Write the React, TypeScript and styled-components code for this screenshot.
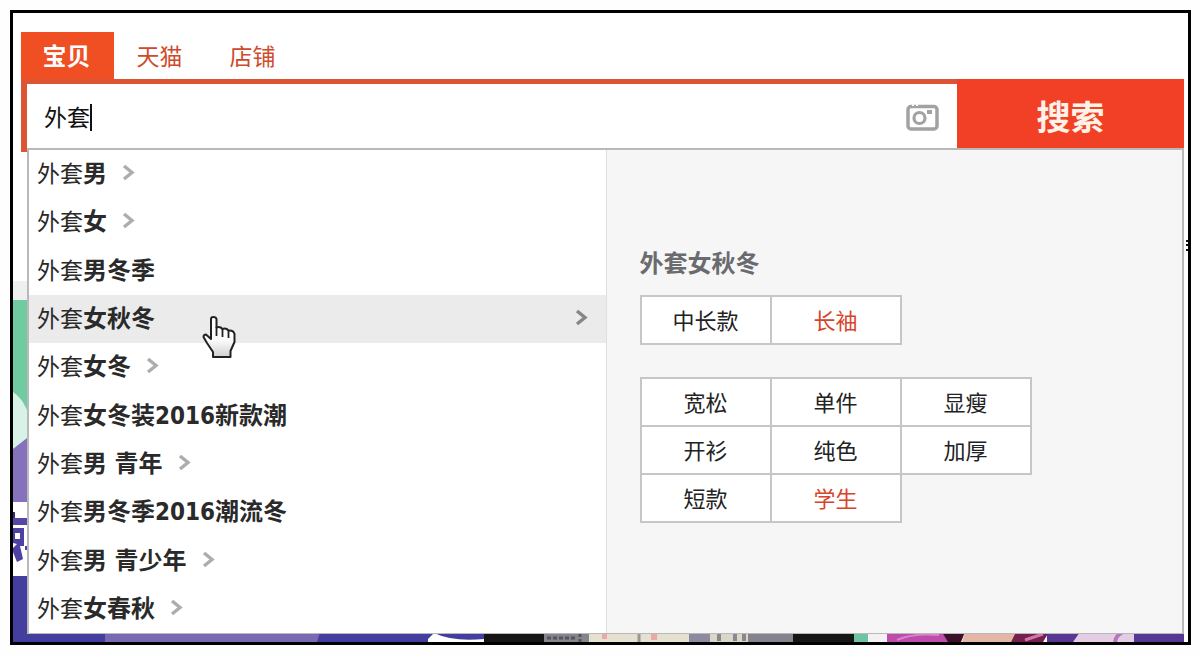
import React from "react";
import styled, { createGlobalStyle } from "styled-components";

const GlobalStyle = createGlobalStyle`
  * { box-sizing: border-box; }
  body {
    margin: 10px 9px 10px 10px;
    background: #fefefe;
    font-family: "DejaVu Sans Condensed", "Noto Sans CJK SC", sans-serif;
    color: #2a2a2a;
  }
  button, input { font: inherit; }
`;

const Frame = styled.main`
  position: relative;
  overflow: hidden;
  border: 3px solid #000;
  padding: 19px 4px 8px 8px;
  background: #fff;
`;

const Backdrop = styled.svg`
  position: absolute;
  inset: 0;
  width: 100%;
  height: 100%;
`;

const Content = styled.div`
  position: relative;
`;

const Tabs = styled.nav`
  display: flex;
`;

const Tab = styled.a<{ $active?: boolean }>`
  width: 93px;
  height: 47px;
  padding-right: 2px;
  line-height: 50px;
  text-align: center;
  text-decoration: none;
  font-size: ${(p) => (p.$active ? 24 : 23)}px;
  font-weight: ${(p) => (p.$active ? 700 : 400)};
  color: ${(p) => (p.$active ? "#fff" : "#cf4a2c")};
  background: ${(p) => (p.$active ? "#f04e23" : "transparent")};
`;

const SearchBar = styled.form`
  display: flex;
  align-items: flex-start;
  height: 73px;
  border-left: 6px solid #dc5433;
`;

const Field = styled.label`
  flex: 1;
  display: flex;
  align-items: center;
  height: 70px;
  padding: 2px 18px 0 17px;
  border-top: 5px solid #dc5433;
  background: #fff;
`;

const Query = styled.input`
  field-sizing: content;
  padding: 0;
  border: 0;
  outline: 0;
  font-size: 23px;
  line-height: 32px;
  color: #111;
`;

const Caret = styled.span`
  width: 2px;
  height: 27px;
  background: #111;
`;

const CameraButton = styled.button`
  display: flex;
  margin-left: auto;
  padding: 0;
  border: 0;
  background: none;
`;

const SubmitButton = styled.button`
  width: 227px;
  height: 69px;
  padding: 8px 0 0;
  border: 0;
  background: #f24027;
  color: #fff3e8;
  font-size: 34px;
  font-weight: 700;
  line-height: 60px;
`;

const Dropdown = styled.section`
  position: relative;
  display: flex;
  margin: -4px 0 0 6px;
  border: 2px solid #b9b9bb;
  border-bottom-width: 1px;
  background: #fff;
`;

const Suggestions = styled.ul`
  flex: 1 1 50%;
  display: grid;
  grid-auto-rows: 1fr;
  min-height: 483px;
  margin: 0;
  padding: 0;
  list-style: none;
`;

const Suggestion = styled.li<{ $active?: boolean }>`
  position: relative;
  background: ${(p) => (p.$active ? "#ebebeb" : "transparent")};
`;

const SuggestionLink = styled.a<{ $active?: boolean }>`
  display: flex;
  align-items: center;
  justify-content: ${(p) => (p.$active ? "space-between" : "flex-start")};
  gap: 15px;
  height: 100%;
  padding: 0 18px 0 8px;
  color: inherit;
  font-size: 23px;
  line-height: 48px;
  text-decoration: none;
  white-space: pre;

  strong { font-size: 24px; }
`;

const HandCursor = styled.svg`
  position: absolute;
  left: 173px;
  top: 20px;
  z-index: 1;
`;

const Refine = styled.aside`
  flex: 1 1 50%;
  padding: 98px 20px 20px 33px;
  border-left: 1px solid #dedede;
  background: #f6f6f6;
`;

const RefineTitle = styled.h2`
  margin: 0 0 15px;
  font-size: 24px;
  line-height: 32px;
  color: #6a6b6e;
`;

const ChipGrid = styled.div`
  display: grid;
  grid-template-columns: repeat(3, 130px);
  grid-auto-rows: 48px;
  margin-bottom: 34px;
`;

const Chip = styled.button<{ $hot?: boolean }>`
  margin: 0 -2px -2px 0;
  padding: 3px 0 0;
  border: 2px solid #c6c6c6;
  background: #fff;
  font-size: 22px;
  line-height: 42px;
  color: ${(p) => (p.$hot ? "#d8432b" : "#222")};
`;

const Chevron = ({ dark }: { dark?: boolean }) => (
  <svg width="13" height="18" viewBox="0 0 13 18" fill="none" aria-hidden="true">
    <path d="M2 1 10 7.500 2 14" stroke={dark ? "#84868a" : "#adadad"} strokeWidth="3.400" />
  </svg>
);

const Camera = () => (
  <svg width="33" height="27" viewBox="0 0 33 27" fill="none" stroke="#a2a2a2" aria-hidden="true">
    <rect x="2" y="2.5" width="29" height="22.5" rx="3" strokeWidth="3.5" />
    <circle cx="13.5" cy="14" r="5.5" strokeWidth="3.2" />
    <rect x="21" y="6" width="5" height="4" fill="#a2a2a2" stroke="none" />
    <path d="M6 1.2h2M10 1.2h2" stroke="#fff" strokeWidth="1.4" />
  </svg>
);

const Hand = () => (
  <HandCursor width="34" height="44" viewBox="0 0 34 44" aria-hidden="true">
    <defs>
      <linearGradient id="glove" x1="0" y1="0" x2="0" y2="1">
        <stop offset="0.55" stopColor="#fff" />
        <stop offset="1" stopColor="#cfcfcf" />
      </linearGradient>
    </defs>
    <path
      d="M9 4Q9 2 11.500 2T14.500 4V12.500Q18 11 20.500 14Q24 12.500 26.500 15.500Q31.500 15 32.500 19V27L28.500 36V42H11V37L5 28L1.500 22Q1.500 19.500 4 19.500L9 24Z"
      fill="url(#glove)"
      stroke="#222"
      strokeWidth="2"
      strokeLinejoin="round"
    />
    <path d="M14.500 12V21M20.500 14V22M26.500 16V23" stroke="#222" strokeWidth="1.800" />
  </HandCursor>
);

/* Slivers of the storefront banners that stay visible round the open panel. */
const Banners = () => (
  <Backdrop viewBox="0 0 1175 629" preserveAspectRatio="xMinYMax slice" aria-hidden="true">
    <rect y="268" width="14" height="19" fill="#efefef" />
    <rect y="287" width="14" height="150" fill="#70cba0" />
    <path d="M0 379Q9 385 14 397V429L0 436Z" fill="#d9f2e8" />
    <path d="M0 436 14 425V489H0Z" fill="#8671bd" />
    <rect y="489" width="14" height="74" fill="#fff" />
    <rect y="505" width="14" height="7" fill="#5547a6" />
    <path d="M0 499h2v6H0Z" fill="#302f78" />
    <path d="M0 515H11V533H7L10 546 4 549 0 539ZM12 533h2v4h-2Z" fill="#4b42a3" />
    <path d="M2 520h5v6H2ZM0 530l4 1-4 4Z" fill="#fff" />
    <rect y="563" width="415" height="66" fill="#443f9f" />
    <path d="M92 619H307L304 629H92Z" fill="#7b68b3" />
    <rect x="415" y="619" width="68" height="10" fill="#443f9f" />
    <path d="M415 626 421 620Q440 629 471 626V629H415Z" fill="#fff" />
    <rect x="471" y="619" width="60" height="10" fill="#151515" />
    <rect x="531" y="619" width="45" height="10" fill="#86858b" />
    <path d="M534 625h29M567 620v9" stroke="#55545f" strokeWidth="3" strokeDasharray="4 2" />
    <rect x="576" y="619" width="100" height="10" fill="#e6e0d1" />
    <path d="M589 621h5v5h-5ZM638 621h6v6h-6Z" fill="#e9aaa4" />
    <path d="M626 620v9" stroke="#9a998f" strokeWidth="3" />
    <rect x="676" y="619" width="21" height="10" fill="#8d8a9f" />
    <rect x="697" y="619" width="38" height="10" fill="#dad6c8" />
    <path d="M706 620v8M722 620v8M731 620v8" stroke="#88878c" strokeWidth="4" />
    <rect x="735" y="619" width="45" height="10" fill="#86838f" />
    <rect x="780" y="619" width="61" height="10" fill="#161616" />
    <rect x="841" y="619" width="14" height="10" fill="#6cc5a0" />
    <rect x="855" y="619" width="19" height="10" fill="#f2f1f3" />
    <rect x="874" y="619" width="62" height="10" fill="#bd4cab" />
    <path d="M884 627Q900 620 926 622" stroke="#d984cb" strokeWidth="2" fill="none" />
    <path d="M929 619H952L948 629H935Z" fill="#3d1029" />
    <path d="M952 619H1005L998 629H949Z" fill="#e3b7a3" />
    <path d="M1003 619H1036L1030 629H998Z" fill="#75204f" />
    <path d="M1012 627 1030 621" stroke="#d276a6" strokeWidth="3" />
    <rect x="1034" y="619" width="32" height="10" fill="#583794" />
    <path d="M1060 629 1067 619H1122V629Z" fill="#e3cde5" />
    <path d="M1102 629Q1103 622 1110 619" stroke="#b477bd" strokeWidth="4" fill="none" />
    <rect x="1121" y="619" width="50" height="10" fill="#563793" />
    <path d="M1173 228h2M1173 232h2M1173 237h2" stroke="#111" strokeWidth="2" />
  </Backdrop>
);

type Entry = { text: string; more?: boolean; active?: boolean };

const typed = "外套";

const entries: Entry[] = [
  { text: "男", more: true },
  { text: "女", more: true },
  { text: "男冬季" },
  { text: "女秋冬", more: true, active: true },
  { text: "女冬", more: true },
  { text: "女冬装2016新款潮" },
  { text: "男 青年", more: true },
  { text: "男冬季2016潮流冬" },
  { text: "男 青少年", more: true },
  { text: "女春秋", more: true },
];

const chipGroups = [
  ["中长款", "长袖"],
  ["宽松", "单件", "显瘦", "开衫", "纯色", "加厚", "短款", "学生"],
];

const hotChips = ["长袖", "学生"];

export default function App() {
  return (
    <>
      <GlobalStyle />
      <Frame>
        <Banners />
        <Content>
          <Tabs>
            <Tab href="#item" $active>宝贝</Tab>
            <Tab href="#tmall">天猫</Tab>
            <Tab href="#shop">店铺</Tab>
          </Tabs>
          <SearchBar onSubmit={(e) => e.preventDefault()}>
            <Field>
              <Query aria-label="搜索" defaultValue={typed} autoComplete="off" />
              <Caret />
              <CameraButton type="button" aria-label="图片搜索">
                <Camera />
              </CameraButton>
            </Field>
            <SubmitButton type="submit">搜索</SubmitButton>
          </SearchBar>
          <Dropdown>
            <Suggestions>
              {entries.map(({ text, more, active }) => (
                <Suggestion key={text} $active={active}>
                  <SuggestionLink href="#search" $active={active}>
                    <span>
                      {typed}
                      <strong>{text}</strong>
                    </span>
                    {more && <Chevron dark={active} />}
                  </SuggestionLink>
                  {active && <Hand />}
                </Suggestion>
              ))}
            </Suggestions>
            <Refine>
              <RefineTitle>外套女秋冬</RefineTitle>
              {chipGroups.map((chips) => (
                <ChipGrid key={chips[0]}>
                  {chips.map((chip) => (
                    <Chip key={chip} type="button" $hot={hotChips.includes(chip)}>
                      {chip}
                    </Chip>
                  ))}
                </ChipGrid>
              ))}
            </Refine>
          </Dropdown>
        </Content>
      </Frame>
    </>
  );
}
